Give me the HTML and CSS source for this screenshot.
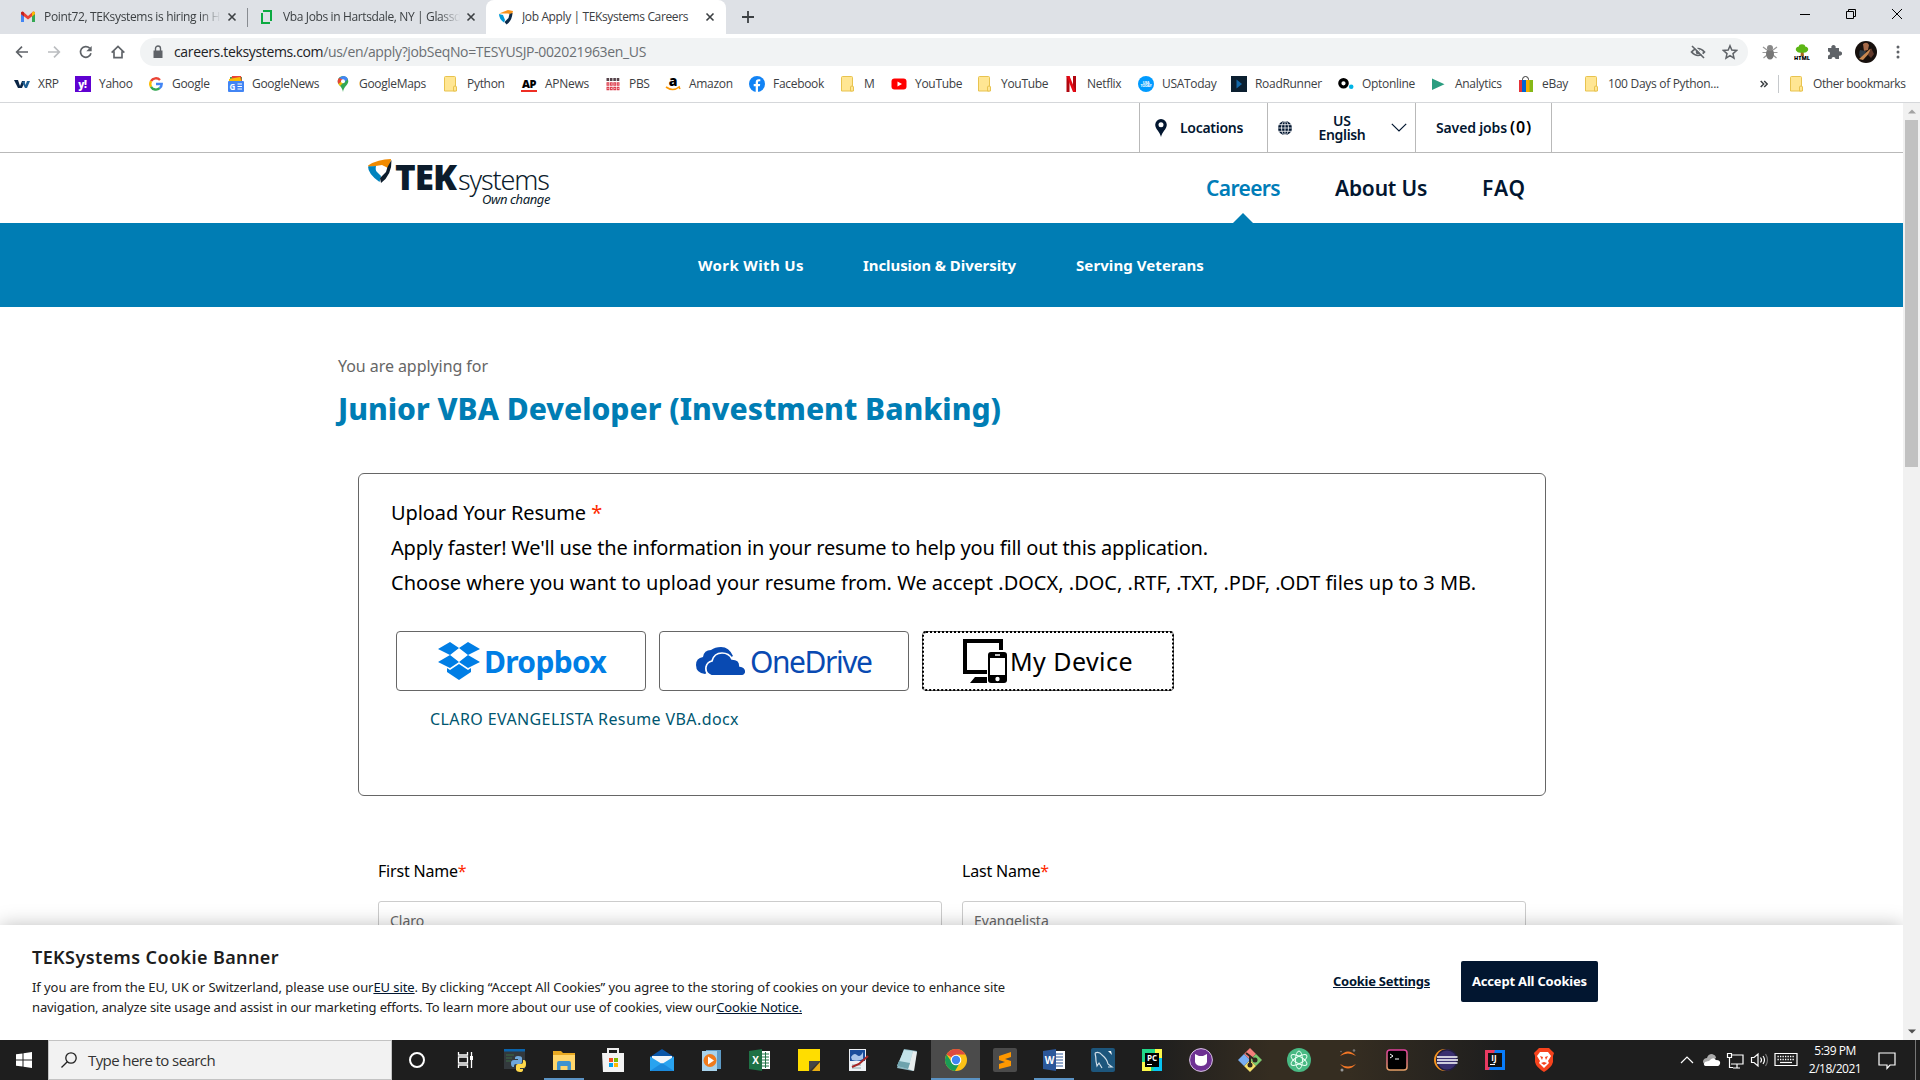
FILE: index.html
```html
<!DOCTYPE html>
<html lang="en">
<head>
<meta charset="utf-8">
<title>Job Apply | TEKsystems Careers</title>
<link rel="stylesheet" href="styles.css">
</head>
<body>
<div class="desktop">
<header class="chrome">
  <div class="tabs">
    <div class="tab tab-mail">
      <svg class="fav" viewBox="0 0 16 16"><path d="M1 3v10h3V6z" fill="#4285f4"/><path d="M15 3v10h-3V6z" fill="#34a853"/><path d="M1 5V3.500q1.500-2 3 0L8 7l4-3.500q1.500-2 3 0V5L8 10.500z" fill="#ea4335"/><path d="M12 3.500q1.500-2 3 0V5l-3 2.500z" fill="#fbbc04"/><path d="M1 3.500V5l3 2.500v-4q-1.500-1.500-3 0z" fill="#c5221f"/></svg>
      <span class="tab-title fade"><span class="tt1">Point72, TEKsystems is hiring in H</span></span>
      <svg class="x" viewBox="0 0 10 10"><path d="M1.500 1.500l7 7M8.500 1.500l-7 7"/></svg>
    </div>
    <div class="tab tab-glass">
      <svg class="fav" viewBox="0 0 16 16"><path d="M4 3V1h9v11h-2V3zM2 4h2v9h7v2H2z" fill="#0caa41"/></svg>
      <span class="tab-title fade"><span class="tt2">Vba Jobs in Hartsdale, NY | Glassd</span></span>
      <svg class="x" viewBox="0 0 10 10"><path d="M1.500 1.500l7 7M8.500 1.500l-7 7"/></svg>
    </div>
    <div class="tab tab-active">
      <svg class="fav" viewBox="0 0 16 16"><path d="M1 4.500L10 1l5 1-1 4-4-1.500z" fill="#f7941d"/><path d="M1 5l4 1 2 5-1 2.500Q1 10 1 5z" fill="#0099d8"/><path d="M14.500 4Q14 12 8.500 15.500L6.500 13l4-4 1-4z" fill="#0b2a4a"/></svg>
      <span class="tab-title"><span class="tt3">Job Apply | TEKsystems Careers</span></span>
      <svg class="x" viewBox="0 0 10 10"><path d="M1.500 1.500l7 7M8.500 1.500l-7 7"/></svg>
    </div>
    <svg class="plus" viewBox="0 0 12 12"><path d="M6 0v12M0 6h12"/></svg>
    <div class="win">
      <svg viewBox="0 0 10 10"><path d="M0 5.500h10"/></svg>
      <svg viewBox="0 0 10 10"><path d="M.5 2.500h7v7h-7zM2.500 2.500v-2h7v7h-2"/></svg>
      <svg viewBox="0 0 10 10"><path d="M0 0l10 10M10 0L0 10"/></svg>
    </div>
  </div>
  <div class="toolbar">
    <svg class="nav-i" viewBox="0 0 24 24"><path d="M21 12H4.500M12 4l-8 8 8 8"/></svg>
    <svg class="nav-i dim" viewBox="0 0 24 24"><path d="M3 12h16.500M12 4l8 8-8 8"/></svg>
    <svg class="nav-i" viewBox="0 0 24 24"><path d="M19.500 14a8 8 0 1 1-2-7.700"/><path d="M20.500 3v8h-8z" fill="#5f6368" stroke="none"/></svg>
    <svg class="nav-i" viewBox="0 0 24 24"><path d="M2.500 13L12 3.500l9.500 9.500M6 11v9.500h12V11"/></svg>
    <div class="omnibox">
      <svg class="lock" viewBox="0 0 12 14"><path d="M1.500 5.500h9v7.500h-9z" fill="#5f6368"/><path d="M3.500 6V3.500a2.500 2.500 0 0 1 5 0V6" fill="none" stroke="#5f6368" stroke-width="1.400"/></svg>
      <span class="url"><b>careers.teksystems.com</b>/us/en/apply?jobSeqNo=TESYUSJP-002021963en_US</span>
      <svg class="omni-i eye" viewBox="0 0 16 16"><path d="M1.500 8Q8 1 14.500 8 8 15 1.500 8z" fill="none" stroke="#5f6368" stroke-width="1.700"/><circle cx="8" cy="8" r="2.300" fill="#5f6368"/><path d="M3.500 1.500l12 12" stroke="#f1f3f4" stroke-width="1.500"/><path d="M2 2l12 12" stroke="#5f6368" stroke-width="1.600"/></svg>
      <svg class="omni-i" viewBox="0 0 16 16"><path d="M8 1.800l1.800 4.300 4.700.4-3.500 3.100 1 4.600-4-2.500-4 2.500 1-4.600L1.500 6.500l4.700-.4z" fill="none" stroke="#5f6368" stroke-width="1.500"/></svg>
    </div>
    <svg class="ext" viewBox="0 0 16 16"><path d="M1 3l4 3m10-3l-4 3M.5 8.500H5m10.500 0H11M1.500 14L5 11m9.500 3L11 11" stroke="#999" stroke-width="1.200"/><ellipse cx="8" cy="10" rx="4" ry="5.500" fill="#777"/><circle cx="8" cy="4" r="3" fill="#888"/></svg>
    <svg class="ext" viewBox="0 0 16 16"><path d="M7 7h2.500l.5 5H6.500z" fill="#a5661b"/><path d="M8 .3q3 0 3.200 2.300Q15 3.500 14 6.500q-2 3-6 2-4 1-6-2-1-3 2.800-3.900Q5 .3 8 .3z" fill="#5cb615"/><text x="8" y="16" class="mini-html">HTML</text></svg>
    <svg class="ext" viewBox="0 0 16 16"><path d="M2 4h3.500a2.200 2.200 0 1 1 4 0H13v3.500a2.200 2.200 0 1 1 0 4V15H9.500a2 2 0 1 0-4 0H2v-3.500a2 2 0 1 0 0-4z" fill="#5f6368"/></svg>
    <svg class="avatar" viewBox="0 0 22 22"><circle cx="11" cy="11" r="11" fill="#17100d"/><path d="M8 3q4-3 6 1l-1 5-4 1z" fill="#a76a48"/><path d="M5 9q-2 5 1 8l4-3 1-4z" fill="#303b45"/><path d="M4 18l11-10 2 1-9 10z" fill="#c98850"/><path d="M16 7l3 6-3 4-3-3z" fill="#60392b"/></svg>
    <svg class="dots" viewBox="0 0 4 16"><circle cx="2" cy="3" r="1.500"/><circle cx="2" cy="8" r="1.500"/><circle cx="2" cy="13" r="1.500"/></svg>
  </div>
  <nav class="bookmarks">
    <div class="marks">
      <a><svg viewBox="0 0 16 16"><path d="M0 4h4l2 6 2-5h3l-3 7H4z" fill="#0b2545"/><path d="M8 6l3 6 2 0 3-7h-3l-1.500 4L10.500 5z" fill="#1e5f94"/></svg><span>XRP</span></a>
      <a><svg viewBox="0 0 16 16"><path fill="#5f01d1" d="M0 0h16v16H0z"/><text x="7.500" y="11.500" class="m-yahoo">y!</text></svg><span>Yahoo</span></a>
      <a><svg viewBox="0 0 16 16"><g fill="none" stroke-width="2.400"><path d="M3 5.200A5.700 5.700 0 0 1 12 4" stroke="#ea4335"/><path d="M3 5.200a5.700 5.700 0 0 0 0 5.600" stroke="#fbbc05"/><path d="M3 10.800A5.700 5.700 0 0 0 11.700 12.200" stroke="#34a853"/><path d="M11.700 12.200Q13.700 10.500 13.700 8H8" stroke="#4285f4"/></g></svg><span>Google</span></a>
      <a><svg viewBox="0 0 16 16"><path d="M2 1h12v6H2z" fill="#34a853"/><path d="M4 0h9l1 6H3z" fill="#ea4335"/><path d="M1 3l11-2 2 6H1z" fill="#fbbc04"/><rect y="5" width="16" height="11" rx="1" fill="#4285f4"/><text x="1.500" y="13.500" class="m-ge">G</text><path d="M9.500 8h4.500M9.500 10.500h4.500M9.500 13h4.500" stroke="#fff"/></svg><span>GoogleNews</span></a>
      <a><svg viewBox="0 0 16 16"><path d="M8 0a5.300 5.300 0 0 1 5.300 5.300C13.300 9 8.500 11 8 16 7.500 11 2.700 9 2.700 5.300A5.300 5.300 0 0 1 8 0z" fill="#34a853"/><path d="M8 0a5.300 5.300 0 0 1 4.900 3.200L8 7.500 4 2z" fill="#4285f4"/><path d="M4 2a5.300 5.300 0 0 0-.6 6L8 3.500z" fill="#ea4335"/><path d="M3.400 8L5 10l5-5-2-1z" fill="#fbbc04"/><circle cx="8" cy="5.300" r="2" fill="#fff"/></svg><span>GoogleMaps</span></a>
      <a><svg viewBox="0 0 16 16"><use href="#folder"/></svg><span>Python</span></a>
      <a><svg viewBox="0 0 16 16"><text x="8" y="11.500" class="m-ap">AP</text><path fill="#ee2e24" d="M0 14h16v2H0z"/></svg><span>APNews</span></a>
      <a><svg viewBox="0 0 16 16"><path d="M1.500 3.500h13" stroke="#55434a" stroke-width="3" stroke-dasharray="2.600 .8"/><path d="M1.500 8h13M1.500 12.500h13" stroke="#dc3d4c" stroke-width="3.600" stroke-dasharray="2.800 .6"/><path d="M2.500 8h12M2.500 12.500h12" stroke="#f8d5d8" stroke-width="1.200" stroke-dasharray="1 2.400"/></svg><span>PBS</span></a>
      <a><svg viewBox="0 0 16 16"><text x="8" y="10" class="m-am">a</text><path d="M1 11q7 5 13 0l1 2M13 11.500l2-.5" fill="none" stroke="#f90" stroke-width="1.600"/></svg><span>Amazon</span></a>
      <a><svg viewBox="0 0 16 16"><circle cx="8" cy="8" r="8" fill="#1283f5"/><path d="M6.700 16v-5.700H4.700V8h2V6.200q0-3 3-3h1.600v2H10q-1 0-1 1V8h2.200l-.4 2.300H9V16z" fill="#fff"/></svg><span>Facebook</span></a>
      <a><svg viewBox="0 0 16 16"><use href="#folder"/></svg><span>M</span></a>
      <a><svg viewBox="0 0 16 16"><rect x=".5" y="2.500" width="15" height="11" rx="3" fill="#f00"/><path d="M6.500 5.500L11 8l-4.500 2.500z" fill="#fff"/></svg><span>YouTube</span></a>
      <a><svg viewBox="0 0 16 16"><use href="#folder"/></svg><span>YouTube</span></a>
      <a><svg viewBox="0 0 16 16"><path d="M3.500 0v16h3V0zM10 0v16h3V0z" fill="#b1060f"/><path d="M3.500 0h3L13 16h-3z" fill="#e50914"/></svg><span>Netflix</span></a>
      <a><svg viewBox="0 0 16 16"><circle cx="8" cy="8" r="8" fill="#009bff"/><text x="8" y="7.500" class="m-usa">USA</text><text x="8" y="11" class="m-usa">TODAY</text></svg><span>USAToday</span></a>
      <a><svg viewBox="0 0 16 16"><path fill="#0b1f30" d="M0 0h16v16H0z"/><path d="M5.500 3.500L11 8l-5.500 4.500z" fill="#1468a8"/></svg><span>RoadRunner</span></a>
      <a><svg viewBox="0 0 16 16"><circle cx="5.500" cy="7.300" r="3.700" fill="none" stroke="#000" stroke-width="3.200"/><circle cx="13.200" cy="10.800" r="2.300" fill="#00b4e6"/></svg><span>Optonline</span></a>
      <a><svg viewBox="0 0 16 16"><path d="M1 2.500L13.500 8.300 1 14z" fill="#2a9d80"/></svg><span>Analytics</span></a>
      <a><svg viewBox="0 0 16 16"><path d="M4.500 5V3.500a3 3 0 0 1 6 0V5" fill="none" stroke="#333"/><path fill="#e53238" d="M1 4h3.500v12H1z"/><path fill="#0064d2" d="M4 4h4v12H4z"/><path fill="#f5af02" d="M8 4h4v12H8z"/><path fill="#86b817" d="M11.500 4H15v12h-3.500z"/></svg><span>eBay</span></a>
      <a><svg viewBox="0 0 16 16"><use href="#folder"/></svg><span>100 Days of Python...</span></a>
    </div>
    <svg class="more" viewBox="0 0 8 8"><path d="M.7 1l3 3-3 3M4.200 1l3 3-3 3"/></svg>
    <a class="other"><svg viewBox="0 0 16 16"><g id="folder"><path d="M2.500.5h9q1 0 1 1v13.500h-11V1.500q0-1 1-1z" fill="#ffe693" stroke="#e8c34f"/><path d="M10.500 11q0-1 1.500-1t1.500 1v4h-3z" fill="#ffe693" stroke="#e8c34f"/></g></svg><span>Other bookmarks</span></a>
  </nav>
</header>

<div class="viewport">
<main class="page">
  <div class="utility">
    <div class="u-loc"><svg viewBox="0 0 12 18"><path d="M6 0a5.800 5.800 0 0 1 5.800 5.800C11.800 10 7 13 6 18 5 13 .2 10 .2 5.800A5.800 5.800 0 0 1 6 0z" fill="#021630"/><circle cx="6" cy="5.800" r="2.500" fill="#fff"/></svg><span class="loc">Locations</span></div>
    <div class="u-lang"><svg class="globe" viewBox="0 0 14 14"><circle cx="7" cy="7" r="7" fill="#021630"/><g fill="none" stroke="#fff" stroke-width=".8"><ellipse cx="7" cy="7" rx="3.500" ry="7"/><path d="M7 0v14M0 7h14M1 3.700h12M1 10.300h12"/></g></svg><span class="lang">US<br><span class="eng">English</span></span><svg class="chev" viewBox="0 0 16 9"><path d="M.8.800L8 8 15.200.800"/></svg></div>
    <div class="u-saved"><span class="saved">Saved jobs</span><span class="zero">(0)</span></div>
  </div>
  <div class="masthead">
    <div class="brand">
      <svg class="mark" viewBox="0 0 24 24"><path d="M0 6.500Q10 0 23 0q0 3-3 9L14 6 1 8z" fill="#f08a00"/><path d="M0 7.500L8 7q-1 4 1 6l4 4-1.500 6Q0 15 0 7.500z" fill="#0083be"/><path d="M23.500 1Q24 16 13 24l-1-5 6-6 1.500-5z" fill="#0c1c2c"/></svg>
      <div class="words"><div class="word"><b class="tek">TEK</b><span class="sys">systems</span></div><div class="own"><i class="ownc">Own change</i></div></div>
    </div>
    <nav class="primary"><a class="on"><span class="n1">Careers</span></a><a><span class="n2">About Us</span></a><a><span class="n3">FAQ</span></a></nav>
  </div>
  <nav class="subnav"><a><span class="s1">Work With Us</span></a><a><span class="s2">Inclusion &amp; Diversity</span></a><a><span class="s3">Serving Veterans</span></a></nav>

  <section class="apply">
    <p class="for">You are applying for</p>
    <h1>Junior VBA Developer (Investment Banking)</h1>
    <div class="card">
      <p><span class="c1">Upload Your Resume</span> <em>*</em></p>
      <p class="c2">Apply faster! We'll use the information in your resume to help you fill out this application.</p>
      <p>Choose where you want to upload your resume from. We accept .DOCX, .DOC, .RTF, .TXT, .PDF, .ODT files up to 3 MB.</p>
      <div class="sources">
        <button class="src dropbox"><svg viewBox="0 0 42 38"><path d="M12 0l9 6-9 7L0 7zM30 0l12 7-12 6-9-7zM0 20l12-7 9 7-9 6zM42 20l-12-7-9 7 9 6zM21 22l9 6 3-2v4l-12 8-12-8v-4l3 2z" fill="#007ee5"/></svg><span>Dropbox</span></button>
        <button class="src onedrive"><svg viewBox="0 0 49 28"><path d="M9 27Q0 26 0 18q0-7 7-8 1-7 8-7Q19 0 25 0q8 0 12 9" fill="#094ab2"/><path d="M16 29Q9 27 10 20q1-5 6-6 2-8 10-8 7 0 10 6 8 0 8 7 6 1 6 6-1 4-5 4z" fill="#094ab2" stroke="#fff" stroke-width="1.700"/></svg><span>OneDrive</span></button>
        <button class="src device"><svg viewBox="0 0 44 44"><path d="M0 0h40v11h-4V4H4v27h20v4H0zM12 38h12v6H7z"/><rect x="25" y="13" width="19" height="31" rx="3"/><path fill="#fff" d="M27 19h15v17H27z"/><circle cx="34.500" cy="40" r="2.200" fill="#fff"/><path d="M32 16h5" stroke="#fff" stroke-width="1.500"/></svg><span>My Device</span></button>
      </div>
      <a class="file">CLARO EVANGELISTA Resume VBA.docx</a>
    </div>
    <form class="names">
      <label><span class="lab">First Name<em>*</em></span><span class="field">Claro</span></label>
      <label><span class="lab">Last Name<em>*</em></span><span class="field">Evangelista</span></label>
    </form>
  </section>
  <aside class="cookie">
    <div class="cookie-copy">
      <h2>TEKSystems Cookie Banner</h2>
      <p><span class="k2">If you are from the EU, UK or Switzerland, please use our<a>EU site</a>. By clicking “Accept All Cookies” you agree to the storing of cookies on your device to enhance site</span><br><span class="k3">navigation, analyze site usage and assist in our marketing efforts. To learn more about our use of cookies, view our<a>Cookie Notice.</a></span></p>
    </div>
    <a class="settings">Cookie Settings</a>
    <button class="accept">Accept All Cookies</button>
  </aside>
</main>
<div class="scroll"><svg viewBox="0 0 8 5"><path d="M0 4.500L4 .5l4 4z" fill="#a3a3a3"/></svg><i class="thumb"></i><svg class="down" viewBox="0 0 8 5"><path d="M0 .5l4 4 4-4z" fill="#505050"/></svg></div>
</div>

<footer class="taskbar">
  <div class="start"><svg viewBox="0 0 16 16"><path d="M0 2.300L6.500 1.400V7.500H0zM7.500 1.200L16 0v7.500H7.500zM0 8.500h6.500v6.100L0 13.700zM7.500 8.500H16V16l-8.500-1.200z" fill="#fff"/></svg></div>
  <div class="search"><svg viewBox="0 0 16 16"><circle cx="10" cy="6" r="5.200"/><path d="M6.300 9.700L.5 15.500"/></svg><span class="ts">Type here to search</span></div>
  <div class="apps">
    <i><svg viewBox="0 0 24 24"><circle cx="12" cy="12" r="7" fill="none" stroke="#fff" stroke-width="2"/></svg></i>
    <i><svg viewBox="0 0 24 24"><path d="M4.500 4v3h9V4M4.500 20v-3h9v3M4.500 9h9v6h-9zM17.500 4v16" fill="none" stroke="#fff" stroke-width="1.300"/><path d="M16 8h3v4h-3z" fill="#fff"/></svg></i>
    <i><svg viewBox="0 0 24 24"><path fill="#33393d" d="M1 1h21v20H1z"/><path fill="#0a64ad" d="M1 1h21v2.500H1z"/><path d="M3 7h8M3 10h6M3 13h5" stroke="#3c6d44"/><path d="M15 8q4 0 4 2v4q0 2-2 2h-4q-2 0-2 2v1H10q-2 0-2-4 0-3 3-3h4v-1h-3V10q0-2 3-2z" fill="#6fa8dc"/><path d="M20 12h1q2 0 2 4t-2.500 4H17v1h3v1q0 2-3 2t-4-2v-4q0-2 2-2h3q2 0 2-2z" fill="#ffd94a"/></svg></i>
    <i class="open"><svg viewBox="0 0 24 24"><path d="M1 3h8l2 2h12v17H1z" fill="#e8a922"/><path d="M1 7h22v15H1z" fill="#ffd66b"/><path d="M5 22v-7q0-2 2-2h10q2 0 2 2v7h-3.500v-4h-7v4z" fill="#3f93cf"/></svg></i>
    <i><svg viewBox="0 0 24 24"><path d="M7 6V1h10v5" fill="none" stroke="#eee" stroke-width="2"/><path fill="#f3f3f3" d="M1 5h22v19H2z"/><path fill="#f25022" d="M8 10h4v4H8z"/><path fill="#7fba00" d="M13 10h4v4h-4z"/><path fill="#00a4ef" d="M8 15h4v4H8z"/><path fill="#ffb900" d="M13 15h4v4h-4z"/></svg></i>
    <i><svg viewBox="0 0 24 24"><path d="M0 9l12-8 12 8v14H0z" fill="#0a56a8"/><path d="M2 8h20v9H2z" fill="#f2f6fa"/><path d="M0 8.500L12 16l12-7.500V23H0z" fill="#29a3ef"/><path d="M0 23L12 15l12 8z" fill="#1b8adc"/></svg></i>
    <i><svg viewBox="0 0 24 24"><path fill="#5e9bc6" d="M7 2h15v19H7z"/><path fill="#a9d3ec" d="M3 3h15v20H3z"/><circle cx="11" cy="12.500" r="6.500" fill="#f07a1c"/><path d="M9 8.500l6 4-6 4z" fill="#fff"/></svg></i>
    <i><svg viewBox="0 0 24 24"><path fill="#fff" d="M12 3h10v18H12z"/><path d="M14 6h7M14 9h7M14 12h7M14 15h7M14 18h7M17.500 4v16" stroke="#217346"/><path d="M1 3l13-2v22L1 21z" fill="#1e7145"/><text x="7.500" y="16" class="tb-w">X</text></svg></i>
    <i><svg viewBox="0 0 24 24"><path d="M1 1h22v13l-9 9H1z" fill="#fd0"/><path d="M12 13h11v10H12z" fill="#36342e"/><path d="M12 23V13h11z" fill="#454545"/><path d="M15 23l8-9v9z" fill="#e9ae13"/></svg></i>
    <i><svg viewBox="0 0 24 24"><path fill="#eef1f5" d="M3 1h17v22H3z"/><path fill="#1a4d9c" d="M4 2h15v11H4z"/><path d="M5 9q3-5 6-2t6-3v7q-5 3-11 1z" fill="#a9c5ea"/><path d="M6 17h9M6 20h9" stroke="#8aa"/><path d="M22 8l-9 8-7 3" fill="none" stroke="#a52626" stroke-width="2"/></svg></i>
    <i><svg viewBox="0 0 24 24"><path d="M9 1l13 2-4 20-16-3z" fill="#8fb9c4"/><path d="M9 2l9 1-5 18-11-3z" fill="#c4e3e9"/><path d="M18 3l4 1-3 19-6-2z" fill="#e8eded"/><path d="M4 13l11 2-2 6-11-3z" fill="#6ea3ad"/></svg></i>
    <i class="open current"><svg viewBox="0 0 24 24"><circle cx="12" cy="12" r="11" fill="#fbc116"/><path d="M12 12L2.500 6.500A11 11 0 0 1 21.500 6.500H12z" fill="#de4b3f"/><path d="M2.500 6.500A11 11 0 0 0 11 23l5-8.500H8z" fill="#1a9c56"/><circle cx="12" cy="12" r="5.300" fill="#fff"/><circle cx="12" cy="12" r="4.200" fill="#3f85f2"/></svg></i>
    <i><svg viewBox="0 0 24 24"><rect y="0" width="24" height="24" rx="2" fill="#4b4b4b"/><path d="M6 8l12-4v5l-6 2 6 2v5L6 21v-5l6-2-6-2z" fill="#ff9800"/></svg></i>
    <i class="open"><svg viewBox="0 0 24 24"><path fill="#fff" d="M12 3h11v18H12z"/><path d="M14 6h7M14 9h7M14 12h7M14 15h7M14 18h7" stroke="#2b579a"/><path d="M1 3l13-2v22L1 21z" fill="#2b579a"/><text x="7.500" y="16" class="tb-w">W</text></svg></i>
    <i><svg viewBox="0 0 24 24"><rect width="24" height="24" rx="2" fill="#1d567c"/><path d="M4 5q4-2 7 2 5 4 6 9l4 3-4 0M4 5q1 4 1 8l1 5 2-3 3 5" fill="none" stroke="#d2dfe8" stroke-width="1.200"/><path d="M17 3l4 4-1-4z" fill="#fff"/></svg></i>
    <i><svg viewBox="0 0 24 24"><path fill="#21d789" d="M2 1h20v22H2z"/><path fill="#fcf84a" d="M2 14h9v9H2zM15 1h7v9h-7z"/><path fill="#07c3f2" d="M16 10h6v13h-9z"/><path fill="#000" d="M5 5h14v14H5z"/><text x="12" y="13" class="tb-pc">PC</text><path d="M7 16.500h5" stroke="#fff"/></svg></i>
    <i><svg viewBox="0 0 24 24"><circle cx="12" cy="12" r="11.400" fill="#6e3193" stroke="#d9c4e5"/><path d="M6 6l4 2h4l4-2v5q1 7-6 7t-6-7z" fill="#fff"/></svg></i>
    <i><svg viewBox="0 0 24 24"><path d="M12 0l6 6-6 6-6-6z" fill="#f47f7b"/><path d="M18 6l6 6-6 6-6-6z" fill="#7bc96f"/><path d="M12 12l6 6-6 6-6-6z" fill="#f5e06a"/><path d="M6 6l6 6-6 6-6-6z" fill="#78aef2"/><path d="M8 5l9 7M12 8v10" stroke="#30271f" stroke-width="2"/><circle cx="12" cy="17" r="2.500" fill="#30271f"/><circle cx="17" cy="12" r="2.500" fill="#30271f"/></svg></i>
    <i><svg viewBox="0 0 24 24"><circle cx="12" cy="12" r="12" fill="#48b983"/><g fill="none" stroke="#eafff4"><ellipse cx="12" cy="12" rx="3.500" ry="9"/><ellipse cx="12" cy="12" rx="3.500" ry="9" transform="rotate(60 12 12)"/><ellipse cx="12" cy="12" rx="3.500" ry="9" transform="rotate(120 12 12)"/></g></svg></i>
    <i><svg viewBox="0 0 24 24"><path d="M4 8q8-9 16 0-8-5-16 0zM4 16q8 9 16 0-8 5-16 0z" fill="#f37726"/><circle cx="18" cy="2.500" r="1.300" fill="#777"/><circle cx="6" cy="22" r="1.500" fill="#999"/><circle cx="5" cy="3.500" r=".8" fill="#777"/></svg></i>
    <i><svg viewBox="0 0 24 24"><defs><linearGradient id="term" x2="0" y2="1"><stop stop-color="#e0409c"/><stop offset="1" stop-color="#e5a066"/></linearGradient></defs><rect x="2" y="2" width="20" height="20" rx="3" fill="#000" stroke="url(#term)" stroke-width="1.500"/><path d="M5 6l3 2-3 2M10 11h4" fill="none" stroke="#fff"/></svg></i>
    <i><svg viewBox="0 0 24 24"><circle cx="11" cy="12" r="11" fill="#f7941e"/><circle cx="13" cy="12" r="11" fill="#211d40"/><circle cx="13" cy="12" r="9.500" fill="#3a2f70"/><path d="M3 9h20.500M3 12h21M3 15h20.500" stroke="#fff" stroke-width="1.700"/></svg></i>
    <i><svg viewBox="0 0 24 24"><path fill="#e83a61" d="M2 2h12v20H2z"/><path fill="#087cfa" d="M12 2h10v20H6z"/><path fill="#101010" d="M5 5h14v14H5z"/><text x="11" y="13" class="tb-pc">IJ</text><path d="M7 16.500h5" stroke="#fff"/></svg></i>
    <i><svg viewBox="0 0 24 24"><path d="M7 0h10l3 3 2 2-1 3v6q-1 5-9 10-8-5-9-10V8L2 5l2-2z" fill="#f6431d"/><path d="M8 4h8l3 4-3 5 1 2-5 5-5-5 1-2-3-5z" fill="#fff"/><path d="M8 8l3 1-1 3zM16 8l-3 1 1 3zM9 15l3-1 3 1-3 2z" fill="#f6431d"/></svg></i>
  </div>
  <div class="tray">
    <svg viewBox="0 0 24 24"><path d="M6 15l6-6 6 6"/></svg>
    <svg viewBox="0 0 24 24"><path d="M7 17q-3-1-3-4 1-3 4-3 1-4 5-4 4 1 4 4z" fill="#aaa" stroke="none"/><path d="M6.500 18q-3-1-.5-4 3-1 4-1 4-5 7-1 5 0 4 4-1 2-2 2z" fill="#fff" stroke="none"/></svg>
    <svg viewBox="0 0 24 24"><path d="M8 7h12v9H8M14 16v4M10 20h7M4.500 5.500h4v4h-4zM6.500 10v9.500H10"/></svg>
    <svg viewBox="0 0 24 24"><path d="M4.500 9.500H7L11 6v12l-4-3.500H4.500zM13.500 9.500q2 2.500 0 5M16 8q3 4 0 8"/><path d="M18.500 6q4 6 0 12" stroke="#777"/></svg>
    <svg class="kbd" viewBox="0 0 26 24"><path d="M2 5.500h22v12H2z"/><path d="M4.500 8.500h17M4.500 11.500h17" stroke-dasharray="1.300 1.200" stroke-width="1.400"/><path d="M7 14.500h12"/></svg>
    <div class="clock"><span>5:39 PM</span><span>2/18/2021</span></div>
    <svg class="note" viewBox="0 0 24 24"><path d="M4 5h16v12h-5l-3 3.500V17H4z"/></svg>
    <b class="peek"></b>
  </div>
</footer>
</div>
</body>
</html>
```

FILE: styles.css
```css
* { box-sizing: border-box; }
body { margin: 0; background: #fff; overflow: hidden; }
svg { display: block; flex: none; }
p, h1, h2 { margin: 0; }
button { border: 0; margin: 0; padding: 0; background: none; font: inherit; }
em { font-style: normal; color: #ff2a00; }
.desktop { display: flex; flex-direction: column; width: 1920px; height: 1080px; font-family: "Noto Sans", "Open Sans", sans-serif; white-space: nowrap; }

/* browser frame */
.chrome { height: 103px; flex: none; font-family: "Open Sans", "Noto Sans", sans-serif; font-size: 12px; color: #3c4043; border-bottom: 1px solid #d5d7da; }
.tabs { display: flex; height: 34px; background: #dee1e6; align-items: center; }
.tab { display: flex; align-items: center; height: 34px; }
.tab-mail { width: 248px; padding-left: 20px; background: linear-gradient(#888c91, #888c91) no-repeat right 0 top 8px / 1px 19px; }
.tab-glass { width: 238px; padding-left: 11px; }
.tab-active { width: 240px; padding-left: 12px; background: #fff; border-radius: 8px 8px 0 0; }
.fav { width: 16px; height: 16px; margin-right: 8px; }
.tab-title { width: 180px; overflow: hidden; line-height: 18px; margin-top: -1px; }
.fade { width: 177px; -webkit-mask-image: linear-gradient(90deg, #000 88%, transparent); mask-image: linear-gradient(90deg, #000 88%, transparent); }
.tt1 { letter-spacing: -.34px; }
.tt2 { letter-spacing: -.37px; }
.tt3 { letter-spacing: -.377px; }
.x { width: 10px; height: 10px; margin-left: 6px; stroke: #3c4043; stroke-width: 1.6; }
.tab-active .x { margin-left: 3px; }
.plus { width: 12px; height: 12px; margin-left: 16px; stroke: #3c4043; stroke-width: 1.8; }
.win { display: flex; gap: 36px; margin-left: auto; padding-right: 18px; margin-bottom: 6px; }
.win svg { width: 10px; height: 10px; fill: none; stroke: #000; overflow: visible; }
.toolbar { display: flex; align-items: center; height: 36px; padding-left: 14px; }
.nav-i { width: 16px; height: 16px; margin-right: 16px; fill: none; stroke: #5f6368; stroke-width: 2.5; }
.nav-i.dim { stroke: #bbbdc0; }
.omnibox { display: flex; align-items: center; width: 1608px; height: 28px; margin-left: -2px; padding-left: 12px; border-radius: 14px; background: #f1f3f4; font-size: 14px; color: #6b6f73; }
.url { letter-spacing: -.345px; margin-top: -2px; }
.omnibox b { font-weight: 400; color: #202124; }
.lock { width: 12px; height: 14px; margin-right: 10px; }
.omni-i { width: 16px; height: 16px; margin-right: 10px; }
.eye { margin-left: auto; margin-right: 16px; }
.ext { width: 16px; height: 16px; margin-left: 16px; }
.omnibox + .ext { margin-left: 14px; }
.mini-html { font: 900 5.5px "Open Sans", sans-serif; text-anchor: middle; }
.avatar { width: 22px; height: 22px; margin-left: 13px; }
.dots { width: 4px; height: 16px; margin-left: 19px; fill: #5f6368; }
.bookmarks { display: flex; align-items: center; height: 28px; padding-left: 14px; }
.marks { display: grid; grid-template-columns: 61px 73px 80px 107px 108px 78px 84px 60px 84px 91px 51px 86px 86px 75px 93px 107px 93px 87px 66px 176px; }
.bookmarks a { display: flex; align-items: center; gap: 8px; letter-spacing: -.3px; }
.bookmarks a svg { width: 16px; height: 16px; }
.bookmarks a span { margin-top: -1px; }
.more { width: 8px; height: 8px; fill: none; stroke: #3c4043; stroke-width: 1.5; }
.bookmarks .other { margin-left: 10px; padding-left: 10px; border-left: 1px solid #c6c9cc; height: 18px; letter-spacing: -.4px; }
.m-yahoo { font: 800 10px "Open Sans", sans-serif; fill: #fff; text-anchor: middle; }
.m-ge { font: 700 8px "Open Sans", sans-serif; fill: #fff; }
.m-ap { font: 800 11px "Open Sans", sans-serif; text-anchor: middle; letter-spacing: -.5px; }
.m-am { font: 800 14px "Open Sans", sans-serif; text-anchor: middle; }
.m-usa { font: 700 3.6px "Open Sans", sans-serif; fill: #fff; text-anchor: middle; }

/* page */
.viewport { display: flex; height: 937px; flex: none; }
.page { position: relative; width: 1903px; height: 937px; overflow: hidden; background: #fff; color: #000; }
.utility { display: flex; height: 50px; padding-left: 1139px; border-bottom: 1px solid #b9b9b9; color: #021630; font-weight: 600; font-size: 14px; }
.utility > div { display: flex; align-items: center; border-left: 1px solid #b9b9b9; }
.u-loc { width: 128px; padding-left: 15px; }
.u-loc svg { width: 12px; height: 18px; margin-right: 13px; }
.loc { letter-spacing: -.29px; }
.u-lang { width: 148px; padding-left: 10px; }
.globe { width: 14px; height: 14px; }
.lang { width: 66px; margin: 0 16px 0 17px; text-align: center; line-height: 14px; }
.eng { letter-spacing: -.33px; }
.chev { width: 16px; height: 9px; fill: none; stroke: #021630; stroke-width: 1.2; }
.utility .u-saved { width: 137px; padding-left: 20px; border-right: 1px solid #b9b9b9; }
.saved { letter-spacing: -.14px; }
.zero { margin: -1px 0 0 3px; color: #000; font-size: 16px; letter-spacing: .8px; }
.masthead { display: flex; height: 70px; padding-left: 368px; }
.brand { display: flex; width: 838px; padding-top: 6px; }
.mark { width: 24px; height: 24px; }
.words { width: 158px; margin-left: 3px; color: #0c1c2c; }
.word { display: flex; align-items: baseline; height: 33px; line-height: 36px; }
.tek { width: 63px; font-size: 35px; font-weight: 900; letter-spacing: -1px; }
.sys { font-size: 27px; font-weight: 300; letter-spacing: -1.15px; }
.own { display: flex; justify-content: flex-end; font-size: 13px; line-height: 14px; padding-right: 3px; }
.ownc { letter-spacing: -.4px; }
.primary { display: flex; gap: 55px; font-size: 21px; font-weight: 600; line-height: 40px; padding-top: 15px; color: #021630; }
.n1 { letter-spacing: -.63px; }
.n2 { letter-spacing: -.2px; }
.n3 { letter-spacing: .96px; }
.on { position: relative; color: #007db8; }
.on::after { content: ""; position: absolute; left: 27px; bottom: 0; border: 10px solid transparent; border-top: 0; border-bottom-color: #007db4; }
.subnav { display: flex; height: 84px; padding-left: 698px; background: #007db4; color: #fff; font-size: 15px; font-weight: 700; line-height: 84px; }
.s1 { letter-spacing: .37px; }
.s2 { margin-left: 59px; letter-spacing: -.07px; }
.s3 { margin-left: 60px; letter-spacing: .08px; }
.apply { padding: 47px 358px 0 338px; }
.for { font-size: 16px; line-height: 24px; letter-spacing: -.06px; color: #666; }
h1 { margin-top: 9px; font-size: 30px; line-height: 44px; font-weight: 800; color: #007db4; }
.card { width: 1188px; height: 323px; margin: 42px 0 0 20px; padding: 21px 0 0 32px; border: 1px solid #666; border-radius: 6px; font-size: 20px; line-height: 35px; }
.c1 { letter-spacing: -.1px; }
.c2 { letter-spacing: -.187px; }
.sources { display: flex; gap: 13px; margin: 31px 0 0 5px; }
.src { display: flex; align-items: center; width: 250px; height: 60px; border: 1px solid #666; border-radius: 4px; }
.dropbox { padding-left: 41px; font-size: 30px; font-weight: 700; letter-spacing: -.7px; color: #007ee5; }
.dropbox svg { width: 42px; height: 38px; margin-right: 4px; }
.onedrive { padding-left: 36px; font-size: 30px; letter-spacing: -1.45px; color: #094ab2; }
.onedrive svg { width: 49px; height: 28px; margin-right: 5px; }
.device { width: 252px; padding-left: 40px; font-size: 25px; letter-spacing: .44px; outline: 2px dotted #000; outline-offset: -2px; }
.device svg { width: 44px; height: 44px; margin-right: 3px; }
.file { display: block; margin: 16px 0 0 39px; font-size: 16px; line-height: 24px; letter-spacing: .4px; color: #00566f; }
.names { display: flex; gap: 20px; margin: 63px 0 0 40px; }
.names label { display: block; width: 564px; }
.lab { display: block; font-size: 16px; line-height: 24px; letter-spacing: -.2px; }
.field { display: block; height: 42px; margin-top: 18px; padding-left: 11px; border: 1px solid #ccc; border-radius: 3px; font-size: 14px; line-height: 38px; color: #666; }
.cookie { position: absolute; left: 0; right: 0; bottom: 0; height: 115px; display: flex; padding-left: 32px; background: #fff; box-shadow: 0 0 18px rgba(0, 0, 0, .25); }
.cookie-copy { width: 1301px; padding-top: 20px; }
.cookie h2 { font-size: 18px; line-height: 24px; font-weight: 600; letter-spacing: .395px; color: #1d1d1d; }
.cookie p { margin-top: 9px; font-size: 13px; line-height: 19.5px; color: #222; }
.cookie p a { color: #021630; text-decoration: underline; }
.k2 { letter-spacing: -.072px; }
.k3 { letter-spacing: -.143px; }
.settings { width: 128px; margin-top: 36px; line-height: 41px; font-size: 13px; font-weight: 700; letter-spacing: -.27px; color: #021630; text-decoration: underline; }
.accept { width: 137px; height: 41px; margin-top: 36px; padding-bottom: 2px; border-radius: 2px; background: #021630; color: #fff; font-size: 13px; font-weight: 700; letter-spacing: -.19px; }
.scroll { width: 17px; display: flex; flex-direction: column; align-items: center; background: #f1f1f1; padding: 6px 0; }
.scroll svg { width: 8px; height: 5px; }
.thumb { width: 13px; height: 347px; margin-top: 6px; background: #c1c1c1; }
.scroll .down { margin-top: auto; }

/* taskbar */
.taskbar { display: flex; height: 40px; flex: none; background: linear-gradient(90deg, #1e1e1e 1150px, #352d21 1270px, #352d21 1350px, #1e1e1e 1500px); font-family: "Open Sans", "Noto Sans", sans-serif; }
.start { width: 48px; padding: 12px 16px; }
.start svg { width: 16px; height: 16px; }
.search { display: flex; align-items: center; width: 344px; padding-left: 12px; background: #f2f2f2; border: 1px solid #c3c3c3; font-size: 15px; color: #333; }
.search svg { width: 16px; height: 16px; margin-right: 11px; fill: none; stroke: #222; stroke-width: 1.3; }
.ts { letter-spacing: -.58px; }
.apps { display: flex; }
.apps i { display: flex; width: 49px; height: 40px; align-items: center; justify-content: center; font-style: normal; }
.apps svg { width: 24px; height: 24px; }
.open { background: linear-gradient(#5b93c4, #5b93c4) no-repeat center bottom / 40px 2px; }
.current { background-color: #4b4b4b; background-size: 49px 2px; }
.tb-w { font: 700 10px "Open Sans", sans-serif; fill: #fff; text-anchor: middle; }
.tb-pc { font: 700 8px "Open Sans", sans-serif; fill: #fff; text-anchor: middle; }
.tray { display: flex; align-items: center; margin-left: 107px; color: #fff; }
.tray svg { width: 24px; height: 24px; fill: none; stroke: #fff; stroke-width: 1.2; }
.tray svg.kbd { width: 26px; margin-left: 2px; }
.clock { display: flex; flex-direction: column; align-items: center; width: 72px; font-size: 12px; line-height: 18px; letter-spacing: -.5px; }
.tray svg.note { margin-left: 4px; }
.peek { width: 1px; height: 40px; margin-left: 16px; background: #777; }
```
